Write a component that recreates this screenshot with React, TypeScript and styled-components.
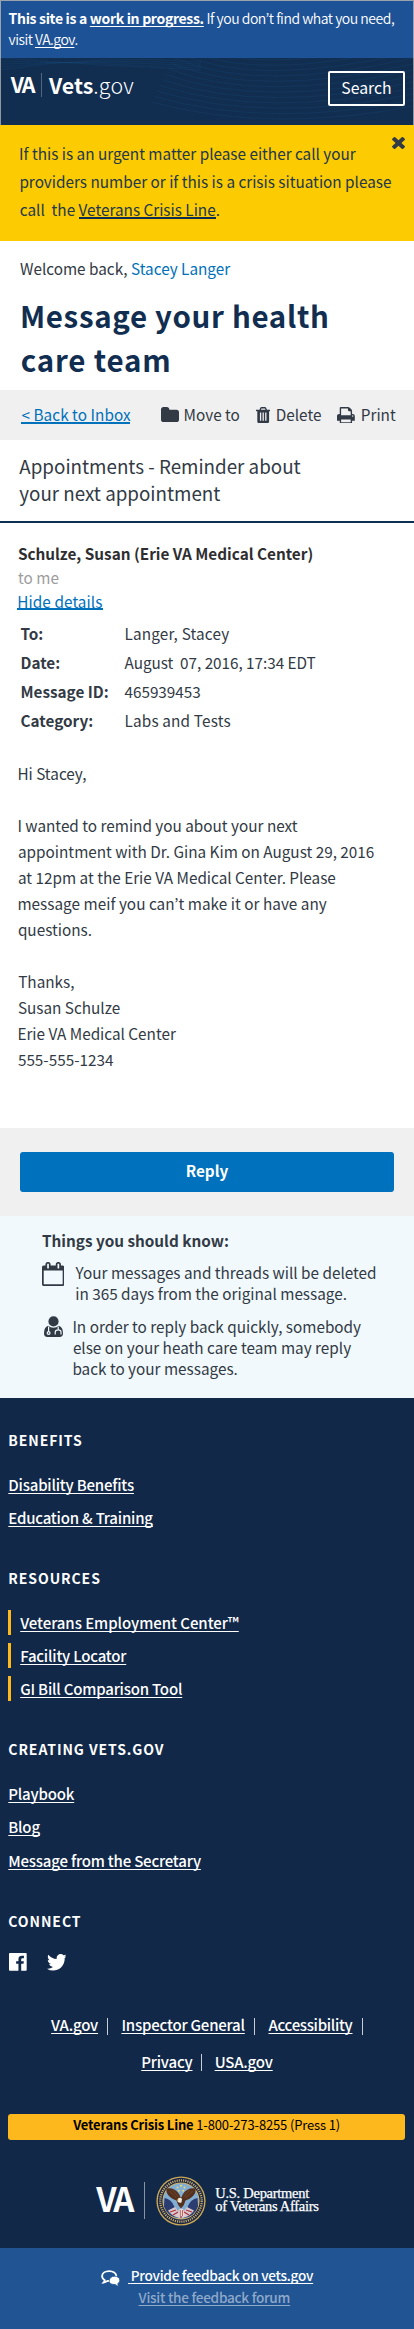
import React from 'react';
import styled, { createGlobalStyle, css } from 'styled-components';

const sans = '"Noto Sans CJK KR", "Noto Sans CJK SC", "Open Sans", sans-serif';

const color = {
  navy: '#112e51',
  footer: '#112849',
  banner: '#1e5296',
  feedback: '#205493',
  link: '#0071bb',
  text: '#323a45',
  gold: '#fdb81e',
  alert: '#fccb02',
  grey: '#f0f0f0',
  pale: '#f1f9fd',
};

const GlobalStyle = createGlobalStyle`
  *, *::before, *::after { box-sizing: border-box; }
  body {
    margin: 0;
    background: #fff;
    color: ${color.text};
    font-family: ${sans};
    font-size: 15.3px;
  }
  a { color: inherit; text-decoration: none; }
`;

const Page = styled.div`
  width: 414px;
  height: 2329px;
  display: flex;
  flex-direction: column;
  white-space: nowrap;
  overflow: hidden;
`;

const Line = styled.span<{ $ls?: number; $indent?: number }>`
  display: block;
  white-space: pre;
  letter-spacing: ${(p) => p.$ls ?? 0}px;
  margin-left: ${(p) => p.$indent ?? 0}px;
`;

/* ---------- Site banner and header ---------- */

const Banner = styled.div`
  height: 58px;
  padding: 6.5px 0 0 7.6px;
  border: solid #9aa3ab;
  border-width: 1px 1px 0;
  background: ${color.banner};
  color: #fff;
  font-size: 14px;
  font-weight: 350;
  line-height: 21.3px;
`;

const BannerStrong = styled.span`
  font-weight: 700;
  letter-spacing: -0.32px;
`;

const Underlined = styled.a<{ $ls?: number }>`
  ${(p) => p.$ls !== undefined && css`letter-spacing: ${p.$ls}px;`}
  text-decoration: underline;
  text-decoration-thickness: 1px;
  text-underline-offset: 2px;
  text-decoration-skip-ink: none;
`;

const Header = styled.header`
  position: relative;
  height: 67px;
  display: flex;
  justify-content: space-between;
  padding: 13px 8px 0 9.8px;
  border: solid #8e979f;
  border-width: 0 1px;
  background: ${color.navy};
  color: #fff;
`;

const HeaderWaves = styled.svg`
  position: absolute;
  inset: 0;
`;

const Brand = styled.div`
  position: relative;
  display: flex;
  height: 30px;
  font-size: 21.4px;
  line-height: 24px;
  align-items: flex-start;
`;

const BrandVA = styled.span`
  width: 30.2px;
  padding-top: 1px;
  font-weight: 700;
  letter-spacing: -1.9px;
`;

const BrandName = styled.span`
  height: 24px;
  margin-top: 1.5px;
  padding: 1px 0 0 7px;
  border-left: 1px solid #51677f;
  font-weight: 700;
  line-height: 22px;
`;

const BrandSuffix = styled.span`
  font-weight: 300;
  letter-spacing: 0.19px;
`;

const SearchButton = styled.button`
  position: relative;
  width: 77px;
  height: 35px;
  padding: 0 0 1px;
  border: 2px solid #fff;
  border-radius: 2px;
  background: transparent;
  color: #fff;
  font: 400 15.8px/30px ${sans};
`;

/* ---------- Crisis alert ---------- */

const Alert = styled.section`
  position: relative;
  height: 116px;
  padding: 15px 0 0 19px;
  background: ${color.alert};
  color: #22374a;
  line-height: 27.9px;
`;

const AlertLink = styled.a`
  border-bottom: 2px solid ${color.navy};
  display: inline-block;
  line-height: 15px;
`;

const CloseButton = styled.button`
  position: absolute;
  top: 12px;
  right: 9px;
  width: 13px;
  height: 12px;
  padding: 0;
  border: 0;
  background: none;
  display: flex;
`;

/* ---------- Title ---------- */

const Intro = styled.section`
  height: 149px;
  padding: 15.3px 0 0 20px;
`;

const Welcome = styled.p`
  margin: 0;
  line-height: 24px;
  b { color: ${color.link}; font-weight: 400; }
`;

const Title = styled.h1`
  margin: 12.5px 0 0;
  color: ${color.navy};
  font-size: 29.5px;
  font-weight: 700;
  line-height: 44px;
`;

/* ---------- Toolbar ---------- */

const Toolbar = styled.nav`
  height: 50px;
  display: flex;
  align-items: flex-start;
  padding: 12.3px 0 0 21px;
  background: ${color.grey};
  line-height: 24px;
`;

const BackLink = styled.a`
  width: 109px;
  height: 22px;
  margin-right: 31px;
  padding-left: 0.5px;
  border-bottom: 2px solid ${color.link};
  color: ${color.link};
  letter-spacing: 0.05px;
`;

const Tool = styled.a<{ $gap: number; $after?: number }>`
  display: flex;
  gap: ${(p) => p.$gap}px;
  margin-right: ${(p) => p.$after ?? 0}px;
  svg { margin-top: 4.5px; flex: none; }
`;

/* ---------- Message ---------- */

const Subject = styled.h2`
  height: 83px;
  margin: 0;
  padding: 11.5px 0 0 19.3px;
  border-bottom: 2px solid #0d3053;
  font-size: 18.8px;
  font-weight: 400;
  line-height: 27px;
`;

const Message = styled.section`
  height: 605px;
  padding: 17.7px 0 0 17px;
`;

const Sender = styled.div`
  line-height: 24px;
  strong { display: block; color: #2e2e30; margin-left: 0.9px; }
`;

const Muted = styled.span`
  display: block;
  margin-left: 1px;
  color: #9c9c9c;
`;

const DetailsToggle = styled.a`
  display: block;
  width: 85.5px;
  height: 21.5px;
  border-bottom: 2px solid ${color.link};
  color: ${color.link};
  text-indent: 0.3px;
  letter-spacing: 0.08px;
`;

const Details = styled.dl`
  display: grid;
  grid-template-columns: 104px auto;
  grid-auto-rows: 29px;
  margin: 8.8px 0 0 3.5px;
  line-height: 29px;
`;

const Term = styled.dt`
  font-weight: 700;
`;

const Value = styled.dd<{ $ls?: number }>`
  margin: 0;
  white-space: pre;
  letter-spacing: ${(p) => p.$ls ?? 0}px;
`;

const Body = styled.div`
  margin: 25.4px 0 0 0.4px;
  line-height: 26px;
  p { margin: 0 0 26px; }
`;

/* ---------- Reply and notes ---------- */

const ReplyBar = styled.div`
  height: 88px;
  padding: 24px 20px;
  background: ${color.grey};
`;

const ReplyButton = styled.button`
  display: block;
  width: 374px;
  height: 40px;
  padding: 0 0 3px;
  border: 0;
  border-radius: 3px;
  background: #0071bc;
  color: #fff;
  font: 700 15.3px/37px ${sans};
`;

const Notes = styled.section`
  height: 182px;
  padding: 13.8px 0 0 42px;
  background: ${color.pale};
  line-height: 21px;
`;

const NotesTitle = styled.h3`
  margin: 0 0 11.3px;
  font-size: 15.3px;
  font-weight: 700;
`;

const Note = styled.div<{ $pad: number; $gap: number; $top: number }>`
  display: flex;
  gap: ${(p) => p.$gap}px;
  padding-left: ${(p) => p.$pad}px;
  margin-bottom: 11.8px;
  svg { flex: none; margin-top: ${(p) => p.$top}px; }
`;

/* ---------- Footer ---------- */

const Footer = styled.footer`
  height: 850px;
  padding: 32px 0 0;
  background: ${color.footer};
  color: #fff;
  font-size: 15px;
  font-weight: 500;
  letter-spacing: -0.2px;
`;

const FooterGroup = styled.section<{ $h: number }>`
  height: ${(p) => p.$h}px;
  padding-left: 8.3px;
`;

const FooterHeading = styled.h4`
  margin: 0;
  font-size: 14px;
  font-weight: 700;
  line-height: 20px;
  letter-spacing: 0.92px;
`;

const FooterList = styled.ul<{ $bar?: boolean }>`
  list-style: none;
  margin: 0;
  padding: 22.2px 0 0;
  display: grid;
  row-gap: 8.2px;
  li {
    height: 25px;
    line-height: 25px;
    ${(p) => p.$bar && css`
      border-left: 3.7px solid ${color.gold};
      padding-left: 8.9px;
    `}
  }
`;

const Social = styled.div`
  display: flex;
  align-items: flex-end;
  gap: 20px;
  height: 19px;
  margin: 20.2px 0 0 0.7px;
`;

const LegalRow = styled.div`
  display: flex;
  justify-content: center;
  line-height: 24px;
  height: 36.6px;
`;

const LegalItem = styled.span<{ $w: number; $bar?: boolean }>`
  display: flex;
  justify-content: space-between;
  align-items: flex-start;
  width: ${(p) => p.$w}px;
  ${(p) => p.$bar && css`
    &::after {
      content: '';
      width: 1px;
      height: 17px;
      margin-top: 4.5px;
      background: #c8ced6;
    }
  `}
`;

const Spacer = styled.i`
  width: 4.5px;
`;

const CrisisBar = styled.div`
  width: 396.7px;
  height: 26px;
  margin: 27.6px 0 0 8.3px;
  border-radius: 3px;
  background: ${color.gold};
  color: #000;
  font-size: 13px;
  font-weight: 400;
  line-height: 22.8px;
  letter-spacing: -0.14px;
  text-align: center;
  b { letter-spacing: -0.18px; }
`;

const Department = styled.div`
  display: flex;
  margin: 35.7px 0 0 96.3px;
`;

const DeptVA = styled.span`
  width: 48px;
  padding-top: 4px;
  font-size: 33px;
  font-weight: 700;
  line-height: 36px;
  letter-spacing: -2.97px;
`;

const DeptRule = styled.span`
  width: 1px;
  height: 37px;
  margin: 6px 10.7px 0 0;
  background: #8793a3;
`;

const DeptName = styled.div`
  margin: 11.1px 0 0 9.3px;
  font: 400 14.5px/13.8px "Liberation Serif", serif;
  -webkit-text-stroke: 0.25px #fff;
`;

const Feedback = styled.section`
  height: 81px;
  padding: 17.4px 0 0 101px;
  background: ${color.feedback};
  color: #fff;
  font-size: 13.6px;
  font-weight: 500;
  line-height: 21.7px;
  letter-spacing: -0.26px;
`;

const FeedbackRow = styled.div`
  display: flex;
  svg { margin: 4.6px 8px 0 0; }
`;

const ForumLink = styled(Underlined)`
  display: block;
  width: max-content;
  margin-left: 37.6px;
  color: #8fa9c9;
`;

/* ---------- Drawings ---------- */

interface IconProps { box: string; w: number; h: number; d: string; fill?: string }
const Icon = ({ box, w, h, d, fill = color.text }: IconProps) => (
  <svg width={w} height={h} viewBox={box} preserveAspectRatio="none" fill={fill}>
    <path d={d} />
  </svg>
);

const paths = {
  times: 'M1490 1322q0 40-28 68l-136 136q-28 28-68 28t-68-28l-294-294-294 294q-28 28-68 28t-68-28l-136-136q-28-28-28-68t28-68l294-294-294-294q-28-28-28-68t28-68l136-136q28-28 68-28t68 28l294 294 294-294q28-28 68-28t68 28l136 136q28 28 28 68t-28 68l-294 294 294 294q28 28 28 68z',
  folder: 'M1728 608v704q0 92-66 158t-158 66h-1216q-92 0-158-66t-66-158v-960q0-92 66-158t158-66h320q92 0 158 66t66 158v32h672q92 0 158 66t66 158z',
  trash: 'M704 1376v-704q0-14-9-23t-23-9h-64q-14 0-23 9t-9 23v704q0 14 9 23t23 9h64q14 0 23-9t9-23zm256 0v-704q0-14-9-23t-23-9h-64q-14 0-23 9t-9 23v704q0 14 9 23t23 9h64q14 0 23-9t9-23zm256 0v-704q0-14-9-23t-23-9h-64q-14 0-23 9t-9 23v704q0 14 9 23t23 9h64q14 0 23-9t9-23zm-544-992h448l-48-117q-7-9-17-11h-317q-10 2-17 11zm928 32v64q0 14-9 23t-23 9h-96v948q0 83-47 143.5t-113 60.5h-832q-66 0-113-58.5t-47-141.5v-952h-96q-14 0-23-9t-9-23v-64q0-14 9-23t23-9h309l70-167q15-37 54-63t79-26h320q40 0 79 26t54 63l70 167h309q14 0 23 9t9 23z',
  print: 'M448 1536h896v-256h-896v256zm0-640h896v-384h-160q-40 0-68-28t-28-68v-160h-640v640zm1152 64q0-26-19-45t-45-19-45 19-19 45 19 45 45 19 45-19 19-45zm128 0v416q0 13-9.5 22.5t-22.5 9.5h-224v160q0 40-28 68t-68 28h-960q-40 0-68-28t-28-68v-160h-224q-13 0-22.5-9.5t-9.5-22.5v-416q0-79 56.5-135.5t135.5-56.5h64v-544q0-40 28-68t68-28h672q40 0 88 20t76 48l152 152q28 28 48 76t20 88v256h64q79 0 135.5 56.5t56.5 135.5z',
  calendar: 'M192 1664h1408v-1024h-1408v1024zm384-1216v-288q0-14-9-23t-23-9h-64q-14 0-23 9t-9 23v288q0 14 9 23t23 9h64q14 0 23-9t9-23zm768 0v-288q0-14-9-23t-23-9h-64q-14 0-23 9t-9 23v288q0 14 9 23t23 9h64q14 0 23-9t9-23zm384-64v1280q0 52-38 90t-90 38h-1408q-52 0-90-38t-38-90v-1280q0-52 38-90t90-38h128v-96q0-66 47-113t113-47h64q66 0 113 47t47 113v96h384v-96q0-66 47-113t113-47h64q66 0 113 47t47 113v96h128q52 0 90 38t38 90z',
  facebook: 'M1579 128q35 0 60 25t25 60v1366q0 35-25 60t-60 25h-391v-595h199l30-232h-229v-148q0-56 23.5-84t91.5-28l122-1v-207q-63-9-178-9-136 0-217.5 80t-81.5 226v171h-200v232h200v595h-735q-35 0-60-25t-25-60v-1366q0-35 25-60t60-25h1366z',
  twitter: 'M1684 408q-67 98-162 167 1 14 1 42 0 130-38 259.5t-115.5 248.5-184.5 210.5-258 146-323 54.5q-271 0-496-145 35 4 78 4 225 0 401-138-105-2-188-64.5t-114-159.5q33 5 61 5 43 0 85-11-112-23-185.5-111.5t-73.5-205.5v-4q68 38 146 41-66-44-105-115t-39-154q0-88 44-163 121 149 294.5 238.5t371.5 99.5q-8-38-8-74 0-134 94.5-228.5t228.5-94.5q140 0 236 102 109-21 205-78-37 115-142 178 93-10 186-50z',
};

const DoctorIcon = () => (
  <svg width="19" height="21" viewBox="0 0 19 21" fill={color.text}>
    <circle cx="9.5" cy="5.4" r="5.1" />
    <path d="M4.2 9.8Q6.5 11.7 9.5 11.7T14.8 9.8Q19 11 19 17.2 19 21 15.6 21H3.4Q0 21 0 17.2 0 11 4.2 9.8Z" />
    <g fill="none" stroke={color.pale} strokeWidth="1.2">
      <path d="M4.600 10.400V15.600" />
      <circle cx="4.600" cy="17" r="1.400" />
      <path d="M14.200 10.400V13.600M11.200 18.400V16.400Q11.200 13.800 14.200 13.800T17 16.400V18.400" />
    </g>
  </svg>
);

const CommentsIcon = () => (
  <svg width="19" height="17" viewBox="0 0 19 17">
    <path
      d="M8.2 1.1C4.2 1.1 1.1 3.1 1.1 6.1c0 1.8 1 3.2 2.7 4.1-.2.9-.7 1.6-1.3 2.3 1.6-.2 2.9-.8 3.9-1.6.6.1 1.2.1 1.8.1 4 0 7.1-2 7.1-4.9s-3.1-5-7.1-5Z"
      fill="none"
      stroke="#fff"
      strokeWidth="1.8"
    />
    <path
      d="M13.6 6.2c3 0 5.2 1.7 5.2 4 0 1.5-.8 2.7-2.1 3.5.2.9.7 1.8 1.5 2.5-1.6-.1-3-.7-4-1.7-3.2.2-6-.9-6-3.5 0-2.8 2.4-4.8 5.4-4.8Z"
      fill="#fff"
      stroke={color.feedback}
      strokeWidth="0.8"
    />
  </svg>
);

const Waves = () => (
  <HeaderWaves width="412" height="67" viewBox="0 0 412 67" fill="none" stroke="#1c5080" strokeOpacity="0.22" strokeWidth="1">
    {Array.from({ length: 13 }, (_, i) => (
      <path key={i} d={`M${150 + i * 3} ${44 - i * 5.5}Q${270 - i * 2} ${76 - i * 5} 412 ${48 - i * 6}`} />
    ))}
    {Array.from({ length: 5 }, (_, i) => (
      <path key={`l${i}`} d={`M0 ${12 - i * 3}Q100 ${-4 + i * 3} 200 ${4 + i * 2}`} />
    ))}
  </HeaderWaves>
);

const Seal = () => (
  <svg width="50" height="50" viewBox="0 0 50 50">
    <circle cx="25" cy="25" r="24.6" fill="#c9a956" />
    <circle cx="25" cy="25" r="23.2" fill="#1c2446" />
    <circle cx="25" cy="25" r="20.7" fill="none" stroke="#c2ab68" strokeWidth="2.3" strokeDasharray="1.2 1" />
    <circle cx="25" cy="25" r="18.6" fill="#cdb163" />
    <circle cx="25" cy="25" r="17.6" fill="#83aed4" />
    <path d="M8.5 22q7 1 10 9l4 11q-11-1-14.5-11.5Z" fill="#2b3c70" />
    <path d="M41.5 22q-7 1-10 9l-4 11q11-1 14.5-11.5Z" fill="#2b3c70" />
    <path d="M12 34.5l7-3.5 3 4 3-3 3 3 3-4 7 3.5q-4 6.5-13 7.8Q16 41 12 34.5Z" fill="#d8c9cd" />
    <path d="M14 36l6-2M17 39l5-3M36 36l-6-2M33 39l-5-3M25 34v8" stroke="#b0303d" strokeWidth="1.3" />
    <g fill="#e7d77c">
      <circle cx="25" cy="9.8" r="1.1" />
      <circle cx="21.5" cy="11.5" r="1" />
      <circle cx="28.5" cy="11.5" r="1" />
      <circle cx="22.8" cy="14.8" r="1" />
      <circle cx="27.2" cy="14.8" r="1" />
    </g>
    <path d="M10.5 12.5q8-1.5 12.5 5.5l2 4 2-4q4.5-7 12.5-5.5.8 5-3.5 8.5-3.5 3-6.500 3.500-1 5-4.500 8-3.500-3-4.500-8-3-.5-6.500-3.500-4.300-3.500-3.500-8.500Z" fill="#54301f" />
    <path d="M13.5 15l7 7M16.5 14l6 7M36.5 15l-7 7M33.5 14l-6 7" stroke="#7d4a2d" strokeWidth="0.8" />
    <path d="M22 22.5q2.500-1.500 4 .5l-.5 3.500q-2 .8-4-1Z" fill="#efe9df" />
    <path d="M20.600 24l1.800-1v2Z" fill="#e3b23c" />
    <path d="M23.500 33h3.500l1.500 7h-6Z" fill="#e6dcd3" />
    <path d="M24.300 34v6M26.500 34v6" stroke="#c1404a" strokeWidth="0.8" />
  </svg>
);

/* ---------- Page ---------- */

const details: [string, string, number][] = [
  ['To:', 'Langer, Stacey', 0.17],
  ['Date:', 'August\u00a0 07, 2016, 17:34 EDT', -0.03],
  ['Message ID:', '465939453', -0.03],
  ['Category:', 'Labs and Tests', 0.17],
];

export default function App() {
  return (
    <Page>
      <GlobalStyle />
      <Banner>
        <Line $ls={-0.48}>
          <BannerStrong>This site is a <Underlined href="#">work in progress.</Underlined></BannerStrong>
          {' '}If you don’t find what you need,
        </Line>
        <Line $ls={-0.52}>visit <Underlined href="#">VA.gov</Underlined>.</Line>
      </Banner>
      <Header>
        <Waves />
        <Brand>
          <BrandVA>VA</BrandVA>
          <BrandName>Vets<BrandSuffix>.gov</BrandSuffix></BrandName>
        </Brand>
        <SearchButton>Search</SearchButton>
      </Header>

      <Alert>
        <Line>If this is an urgent matter please either call your</Line>
        <Line $indent={0.4}>providers number or if this is a crisis situation please</Line>
        <Line $indent={0.8}>call{'\u00a0'} the <AlertLink href="#">Veterans Crisis Line</AlertLink>.</Line>
        <CloseButton aria-label="Close">
          <Icon box="302 366 1188 1188" w={13} h={12} d={paths.times} />
        </CloseButton>
      </Alert>

      <Intro>
        <Welcome>Welcome back, <b>Stacey Langer</b></Welcome>
        <Title>
          <Line $ls={0.66}>Message your health</Line>
          <Line $ls={0.8} $indent={0.8}>care team</Line>
        </Title>
      </Intro>

      <Toolbar>
        <BackLink href="#">&lt; Back to Inbox</BackLink>
        <Tool href="#" $gap={4.6} $after={16}>
          <Icon box="64 128 1664 1408" w={18} h={15.2} d={paths.folder} />Move to
        </Tool>
        <Tool href="#" $gap={5.5} $after={15.6}>
          <Icon box="192 128 1408 1536" w={14.4} h={16.5} d={paths.trash} />Delete
        </Tool>
        <Tool href="#" $gap={6}>
          <Icon box="64 128 1664 1536" w={17.8} h={16.5} d={paths.print} />Print
        </Tool>
      </Toolbar>

      <Subject>
        <Line>Appointments - Reminder about</Line>
        <Line>your next appointment</Line>
      </Subject>

      <Message>
        <Sender>
          <strong>Schulze, Susan (Erie VA Medical Center)</strong>
          <Muted>to me</Muted>
          <DetailsToggle href="#">Hide details</DetailsToggle>
        </Sender>
        <Details>
          {details.map(([term, value, ls]) => (
            <React.Fragment key={term}>
              <Term>{term}</Term>
              <Value $ls={ls}>{value}</Value>
            </React.Fragment>
          ))}
        </Details>
        <Body>
          <p>Hi Stacey,</p>
          <p>
            <Line>I wanted to remind you about your next</Line>
            <Line $indent={0.6}>appointment with Dr. Gina Kim on August 29, 2016</Line>
            <Line $indent={0.6}>at 12pm at the Erie VA Medical Center. Please</Line>
            <Line $ls={0.03}>message meif you can’t make it or have any</Line>
            <Line $indent={0.5}>questions.</Line>
          </p>
          <p>
            <Line $indent={0.8}>Thanks,</Line>
            <Line $indent={0.5}>Susan Schulze</Line>
            <Line>Erie VA Medical Center</Line>
            <Line $indent={0.5}>555-555-1234</Line>
          </p>
        </Body>
      </Message>

      <ReplyBar><ReplyButton>Reply</ReplyButton></ReplyBar>

      <Notes>
        <NotesTitle>Things you should know:</NotesTitle>
        <Note $pad={0} $gap={10.8} $top={-0.3}>
          <Icon box="64 0 1664 1792" w={22.4} h={24} d={paths.calendar} />
          <div>
            <Line $indent={0.4}>Your messages and threads will be deleted</Line>
            <Line>in 365 days from the original message.</Line>
          </div>
        </Note>
        <Note $pad={2} $gap={9.4} $top={0}>
          <DoctorIcon />
          <div>
            <Line>In order to reply back quickly, somebody</Line>
            <Line $indent={0.5}>else on your heath care team may reply</Line>
            <Line>back to your messages.</Line>
          </div>
        </Note>
      </Notes>

      <Footer>
        <FooterGroup $h={137.7}>
          <FooterHeading>BENEFITS</FooterHeading>
          <FooterList>
            <li><Underlined href="#">Disability Benefits</Underlined></li>
            <li><Underlined href="#">Education &amp; Training</Underlined></li>
          </FooterList>
        </FooterGroup>
        <FooterGroup $h={171.3}>
          <FooterHeading>RESOURCES</FooterHeading>
          <FooterList $bar>
            <li><Underlined href="#" $ls={-0.05}>Veterans Employment Center™</Underlined></li>
            <li><Underlined href="#">Facility Locator</Underlined></li>
            <li><Underlined href="#">GI Bill Comparison Tool</Underlined></li>
          </FooterList>
        </FooterGroup>
        <FooterGroup $h={172.4}>
          <FooterHeading>CREATING VETS.GOV</FooterHeading>
          <FooterList>
            <li><Underlined href="#">Playbook</Underlined></li>
            <li><Underlined href="#">Blog</Underlined></li>
            <li><Underlined href="#">Message from the Secretary</Underlined></li>
          </FooterList>
        </FooterGroup>
        <FooterGroup $h={101.7}>
          <FooterHeading>CONNECT</FooterHeading>
          <Social>
            <Icon box="128 128 1536 1536" w={17.7} h={17.7} d={paths.facebook} fill="#fff" />
            <Icon box="108 256 1576 1280" w={19.7} h={16.5} d={paths.twitter} fill="#fff" />
          </Social>
        </FooterGroup>
        <LegalRow>
          <LegalItem $w={57} $bar><Underlined href="#">VA.gov</Underlined></LegalItem>
          <LegalItem $w={146.5} $bar>
            <Spacer /><Underlined href="#">Inspector General</Underlined>
          </LegalItem>
          <LegalItem $w={108.3} $bar>
            <Spacer /><Underlined href="#" $ls={-0.3}>Accessibility</Underlined>
          </LegalItem>
        </LegalRow>
        <LegalRow>
          <LegalItem $w={60.5} $bar><Underlined href="#">Privacy</Underlined></LegalItem>
          <LegalItem $w={71}><Spacer /><Underlined href="#">USA.gov</Underlined></LegalItem>
        </LegalRow>
        <CrisisBar><b>Veterans Crisis Line</b> 1-800-273-8255 (Press 1)</CrisisBar>
        <Department>
          <DeptVA>VA</DeptVA>
          <DeptRule />
          <Seal />
          <DeptName>
            <Line $ls={-0.28}>U.S. Department</Line>
            <Line $ls={-0.3}>of Veterans Affairs</Line>
          </DeptName>
        </Department>
      </Footer>

      <Feedback>
        <FeedbackRow>
          <CommentsIcon />
          <Underlined href="#">{'\u00a0'}Provide feedback on vets.gov</Underlined>
        </FeedbackRow>
        <ForumLink href="#">Visit the feedback forum</ForumLink>
      </Feedback>
    </Page>
  );
}
